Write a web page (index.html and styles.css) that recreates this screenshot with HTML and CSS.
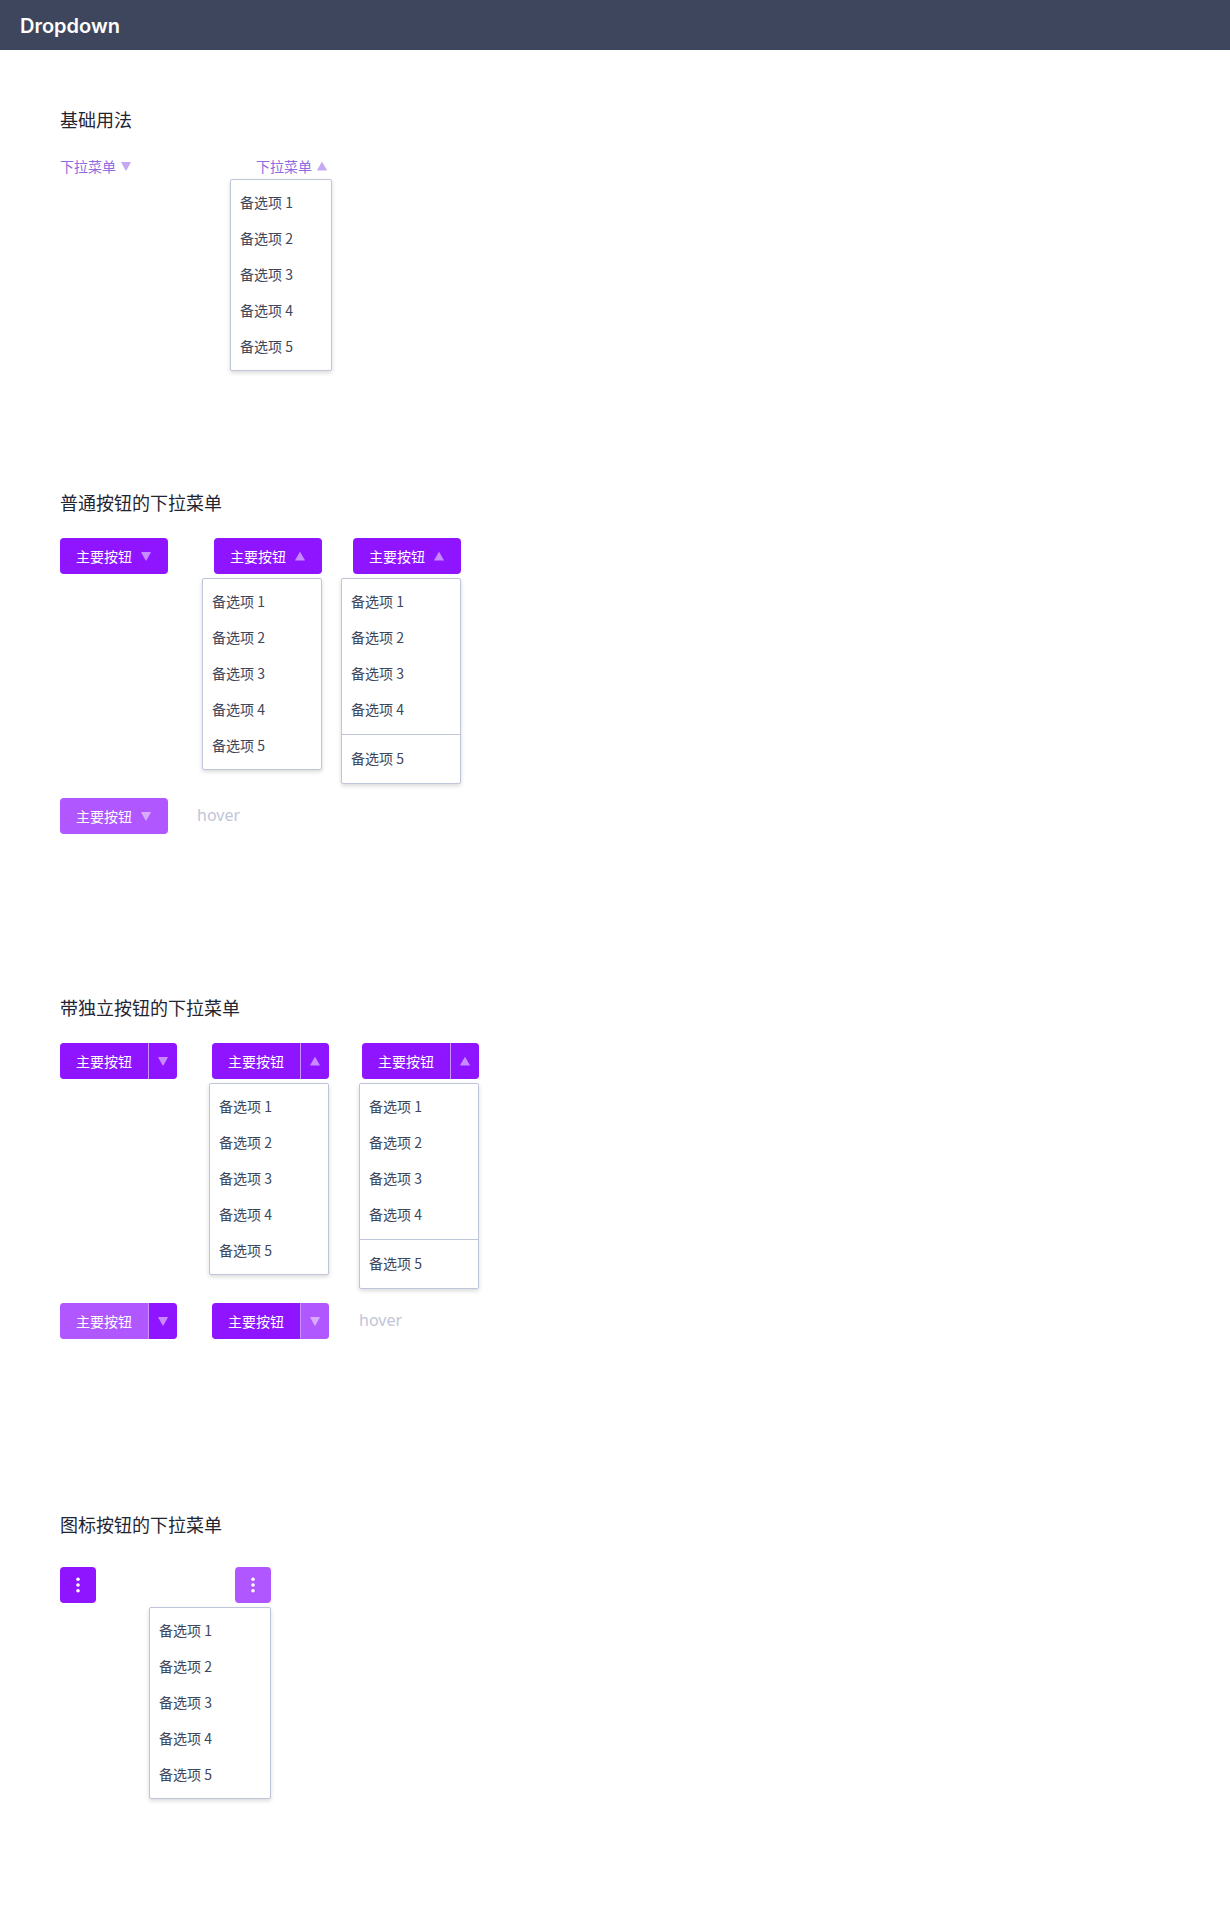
FILE: index.html
```html
<!DOCTYPE html>
<html lang="zh-CN">
<head>
<meta charset="utf-8">
<meta name="viewport" content="width=device-width, initial-scale=1">
<title>Dropdown</title>
<link rel="stylesheet" href="styles.css">
</head>
<body>
<svg class="sprite" aria-hidden="true">
  <symbol id="down" viewBox="0 0 10 9"><path d="M.5 0h9q.6 0 .3.6L5.5 8.3q-.5.7-1 0L.2.6Q-.1 0 .5 0z"/></symbol>
  <symbol id="up" viewBox="0 0 10 9"><path d="M.5 8.5h9q.6 0 .3-.6L5.5.4q-.5-.7-1 0L.2 7.9q-.3.6.3.6z"/></symbol>
  <symbol id="more" viewBox="0 0 4 16"><circle cx="2" cy="2.2" r="1.8"/><circle cx="2" cy="8" r="1.8"/><circle cx="2" cy="13.8" r="1.8"/></symbol>
</svg>
<header class="topbar"><h1>Dropdown</h1></header>
<main class="page">
  <section class="demo demo-link">
    <h2>基础用法</h2>
    <div class="row">
      <div class="dropdown"><a class="link" href="#">下拉菜单<svg class="arrow"><use href="#down"/></svg></a></div>
      <div class="dropdown">
        <a class="link link-open" href="#">下拉菜单<svg class="arrow"><use href="#up"/></svg></a>
        <div class="menu"><ul><li>备选项 1</li><li>备选项 2</li><li>备选项 3</li><li>备选项 4</li><li>备选项 5</li></ul></div>
      </div>
    </div>
  </section>

  <section class="demo demo-button">
    <h2>普通按钮的下拉菜单</h2>
    <div class="row">
      <div class="dropdown"><button class="btn" type="button">主要按钮<svg class="arrow"><use href="#down"/></svg></button></div>
      <div class="dropdown">
        <button class="btn" type="button">主要按钮<svg class="arrow"><use href="#up"/></svg></button>
        <div class="menu"><ul><li>备选项 1</li><li>备选项 2</li><li>备选项 3</li><li>备选项 4</li><li>备选项 5</li></ul></div>
      </div>
      <div class="dropdown">
        <button class="btn" type="button">主要按钮<svg class="arrow"><use href="#up"/></svg></button>
        <div class="menu menu-grouped"><ul><li>备选项 1</li><li>备选项 2</li><li>备选项 3</li><li>备选项 4</li></ul><ul><li>备选项 5</li></ul></div>
      </div>
    </div>
    <div class="states">
      <button class="btn is-hover" type="button">主要按钮<svg class="arrow"><use href="#down"/></svg></button>
      <span class="note">hover</span>
    </div>
  </section>

  <section class="demo demo-split">
    <h2>带独立按钮的下拉菜单</h2>
    <div class="row">
      <div class="dropdown"><div class="split"><button class="btn" type="button">主要按钮</button><button class="btn toggle" type="button" aria-label="展开菜单"><svg class="arrow"><use href="#down"/></svg></button></div></div>
      <div class="dropdown">
        <div class="split"><button class="btn" type="button">主要按钮</button><button class="btn toggle" type="button" aria-label="收起菜单"><svg class="arrow"><use href="#up"/></svg></button></div>
        <div class="menu"><ul><li>备选项 1</li><li>备选项 2</li><li>备选项 3</li><li>备选项 4</li><li>备选项 5</li></ul></div>
      </div>
      <div class="dropdown">
        <div class="split"><button class="btn" type="button">主要按钮</button><button class="btn toggle" type="button" aria-label="收起菜单"><svg class="arrow"><use href="#up"/></svg></button></div>
        <div class="menu menu-grouped"><ul><li>备选项 1</li><li>备选项 2</li><li>备选项 3</li><li>备选项 4</li></ul><ul><li>备选项 5</li></ul></div>
      </div>
      <div class="dropdown"><div class="split"><button class="btn is-hover" type="button">主要按钮</button><button class="btn toggle" type="button" aria-label="展开菜单"><svg class="arrow"><use href="#down"/></svg></button></div></div>
      <div class="dropdown"><div class="split"><button class="btn" type="button">主要按钮</button><button class="btn toggle is-hover" type="button" aria-label="展开菜单"><svg class="arrow"><use href="#down"/></svg></button></div></div>
      <span class="note">hover</span>
    </div>
  </section>

  <section class="demo demo-icon">
    <h2>图标按钮的下拉菜单</h2>
    <div class="row">
      <div class="dropdown"><button class="btn btn-icon" type="button" aria-label="更多"><svg class="more"><use href="#more"/></svg></button></div>
      <div class="dropdown">
        <button class="btn btn-icon is-hover" type="button" aria-label="更多"><svg class="more"><use href="#more"/></svg></button>
        <div class="menu"><ul><li>备选项 1</li><li>备选项 2</li><li>备选项 3</li><li>备选项 4</li><li>备选项 5</li></ul></div>
      </div>
    </div>
  </section>
</main>
</body>
</html>
```
FILE: styles.css
```css
* { box-sizing: border-box; }

body {
  margin: 0;
  background: #fff;
  color: #3d475c;
  font: 14px/18px "Noto Sans CJK SC", sans-serif;
}

.sprite { display: none; }

.topbar {
  display: flex;
  align-items: center;
  height: 50px;
  padding: 1px 20px 0;
  background: #3d465d;
}

.topbar h1 {
  margin: 0;
  color: #fff;
  font: 600 20px/24px Inter, sans-serif;
}

.page { padding: 58px 60px 112px; }

.demo h2 {
  margin: 0 0 25px;
  color: #1f2533;
  font-size: 18px;
  font-weight: 400;
  line-height: 22px;
}

.demo-link h2 { margin-bottom: 27px; }
.demo-icon h2 { margin-bottom: 32px; }
.demo-button { margin-top: 120px; }
.demo-split { margin-top: 162px; }
.demo-icon { margin-top: 174px; }

.row {
  display: grid;
  align-items: start;
  gap: 14px 19px;
}

.demo-link .row { grid-template-columns: 151px 102px; }
.demo-button .row { grid-template-columns: 123px 120px 120px; }
.demo-split .row { grid-template-columns: 119px 120px 120px; column-gap: 30px; }
.demo-icon .row { grid-template-columns: 70px 122px; }

.states {
  display: flex;
  gap: 29px;
  margin-top: 14px;
}

.dropdown {
  display: flex;
  flex-direction: column;
  align-items: flex-end;
  gap: 4px;
}

.dropdown:first-child,
.dropdown:nth-child(4) { align-items: flex-start; }

.link {
  display: flex;
  align-items: center;
  gap: 5px;
  color: #8f6be0;
  text-decoration: none;
}

.link-open { margin-right: 5px; }

.arrow {
  flex: none;
  width: 10px;
  height: 9px;
  margin-top: 1px;
  fill: rgba(255, 255, 255, 0.5);
}

.link .arrow { fill: #c5a8f3; }

.btn {
  display: flex;
  align-items: center;
  gap: 9px;
  height: 36px;
  padding: 0 17px 0 16px;
  border: 0;
  border-radius: 4px;
  background: #8f14ff;
  color: #fff;
  font: inherit;
  cursor: pointer;
}

.is-hover { background: #b057ff; }

.split {
  display: flex;
  gap: 1px;
  border-radius: 4px;
  background: #cb91ff;
}

.split .btn {
  padding: 0 16px;
  border-radius: 4px 0 0 4px;
}

.split .toggle {
  padding: 0 9px;
  border-radius: 0 4px 4px 0;
}

.btn-icon {
  justify-content: center;
  width: 36px;
  padding: 0;
}

.more {
  width: 4px;
  height: 16px;
  fill: #fff;
}

.menu {
  width: 100%;
  border: 1px solid #bfc6d9;
  border-radius: 2px;
  background: #fff;
  box-shadow: 0 2px 4px rgba(0, 0, 0, 0.15);
}

.menu ul {
  margin: 0;
  padding: 5px 0;
  list-style: none;
}

.menu li {
  padding: 0 9px 2px;
  line-height: 34px;
}

.menu-grouped ul { padding-bottom: 6px; }

.menu ul + ul {
  padding-top: 6px;
  border-top: 1px solid #bfc6d9;
}

.note {
  color: #bfc6d9;
  font-family: "Noto Sans", sans-serif;
  font-size: 16px;
  line-height: 34px;
}
```
